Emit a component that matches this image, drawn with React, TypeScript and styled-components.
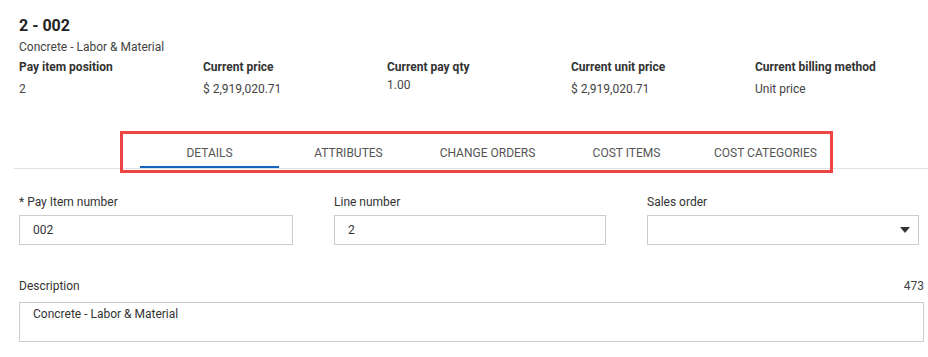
import React from 'react';
import styled, { createGlobalStyle } from 'styled-components';

const GlobalStyle = createGlobalStyle`
  body {
    margin: 0;
    background: #ffffff;
    font-family: Roboto, "Liberation Sans", Arial, sans-serif;
    color: #333333;
  }
`;

const SUMMARY = [
  { label: 'Pay item position', value: '2' },
  { label: 'Current price', value: '$ 2,919,020.71' },
  { label: 'Current pay qty', value: '1.00', raised: true },
  { label: 'Current unit price', value: '$ 2,919,020.71' },
  { label: 'Current billing method', value: 'Unit price' },
];

const TABS = ['DETAILS', 'ATTRIBUTES', 'CHANGE ORDERS', 'COST ITEMS', 'COST CATEGORIES'];

const App = () => {
  return (
    <Page>
      <GlobalStyle />
      <Header>
        <Title>2 - 002</Title>
        <Subtitle>Concrete - Labor &amp; Material</Subtitle>
        <SummaryGrid>
          {SUMMARY.map((item) => (
            <SummaryCell key={item.label}>
              <SummaryLabel>{item.label}</SummaryLabel>
              <SummaryValue $raised={!!item.raised}>{item.value}</SummaryValue>
            </SummaryCell>
          ))}
        </SummaryGrid>
      </Header>

      <TabSection>
        <TabList>
          {TABS.map((tab, i) => (
            <Tab key={tab} $active={i === 0}>{tab}</Tab>
          ))}
        </TabList>
        <Highlight />
      </TabSection>

      <Form>
        <FieldRow>
          <Field>
            <FieldLabel>* Pay Item number</FieldLabel>
            <InputBox>002</InputBox>
          </Field>
          <Field>
            <FieldLabel>Line number</FieldLabel>
            <InputBox>2</InputBox>
          </Field>
          <Field>
            <FieldLabel>Sales order</FieldLabel>
            <SelectBox>
              <Caret />
            </SelectBox>
          </Field>
        </FieldRow>

        <DescriptionField>
          <DescriptionHead>
            <FieldLabel>Description</FieldLabel>
            <Counter>473</Counter>
          </DescriptionHead>
          <TextArea>Concrete - Labor &amp; Material</TextArea>
        </DescriptionField>
      </Form>
    </Page>
  );
};

export default App;

const Page = styled.div`
  width: 928px;
  padding-left: 14px;
  box-sizing: border-box;
`;

const Header = styled.div`
  padding: 16px 0 0 5px;
`;

const Title = styled.div`
  font-size: 16px;
  line-height: 20px;
  font-weight: 700;
  color: #222222;
`;

const Subtitle = styled.div`
  margin-top: 3px;
  font-size: 12px;
  line-height: 16px;
  color: #444444;
`;

const SummaryGrid = styled.div`
  display: grid;
  grid-template-columns: repeat(5, 184px);
  margin-top: 4px;
`;

const SummaryCell = styled.div`
  display: flex;
  flex-direction: column;
`;

const SummaryLabel = styled.div`
  font-size: 12px;
  line-height: 16px;
  font-weight: 700;
  color: #333333;
`;

const SummaryValue = styled.div<{ $raised: boolean }>`
  margin-top: ${(p) => (p.$raised ? '2px' : '6px')};
  font-size: 12px;
  line-height: 16px;
  color: #444444;
`;

const TabSection = styled.div`
  position: relative;
  margin-top: 31px;
  border-bottom: 1px solid #e0e0e0;
`;

const TabList = styled.div`
  display: flex;
  padding-left: 126px;
`;

const Tab = styled.div<{ $active: boolean }>`
  width: 139px;
  box-sizing: border-box;
  padding: 17px 0 5px;
  text-align: center;
  font-size: 12px;
  line-height: 16px;
  color: #555555;
  border-bottom: 2px solid ${(p) => (p.$active ? '#1565c0' : 'transparent')};
`;

const Highlight = styled.div`
  position: absolute;
  left: 106px;
  top: 3px;
  width: 713px;
  height: 42px;
  box-sizing: border-box;
  border: 3px solid #ef4444;
  pointer-events: none;
`;

const Form = styled.div`
  padding: 25px 4px 0 5px;
`;

const FieldRow = styled.div`
  display: grid;
  grid-template-columns: 274px 272px 272px;
  column-gap: 41px;
`;

const Field = styled.div`
  display: flex;
  flex-direction: column;
`;

const FieldLabel = styled.div`
  font-size: 12px;
  line-height: 16px;
  color: #333333;
`;

const InputBox = styled.div`
  margin-top: 5px;
  height: 30px;
  box-sizing: border-box;
  border: 1px solid #cccccc;
  padding: 0 13px;
  display: flex;
  align-items: center;
  font-size: 12px;
  color: #333333;
`;

const SelectBox = styled(InputBox)`
  justify-content: flex-end;
  padding: 0 8px;
`;

const Caret = styled.span`
  width: 0;
  height: 0;
  border-left: 5px solid transparent;
  border-right: 5px solid transparent;
  border-top: 6px solid #333333;
`;

const DescriptionField = styled.div`
  margin-top: 33px;
`;

const DescriptionHead = styled.div`
  display: flex;
  justify-content: space-between;
  align-items: center;
`;

const Counter = styled.div`
  font-size: 12px;
  line-height: 16px;
  color: #444444;
`;

const TextArea = styled.div`
  margin-top: 8px;
  height: 40px;
  box-sizing: border-box;
  border: 1px solid #cccccc;
  padding: 3px 13px;
  font-size: 12px;
  line-height: 16px;
  color: #333333;
`;
